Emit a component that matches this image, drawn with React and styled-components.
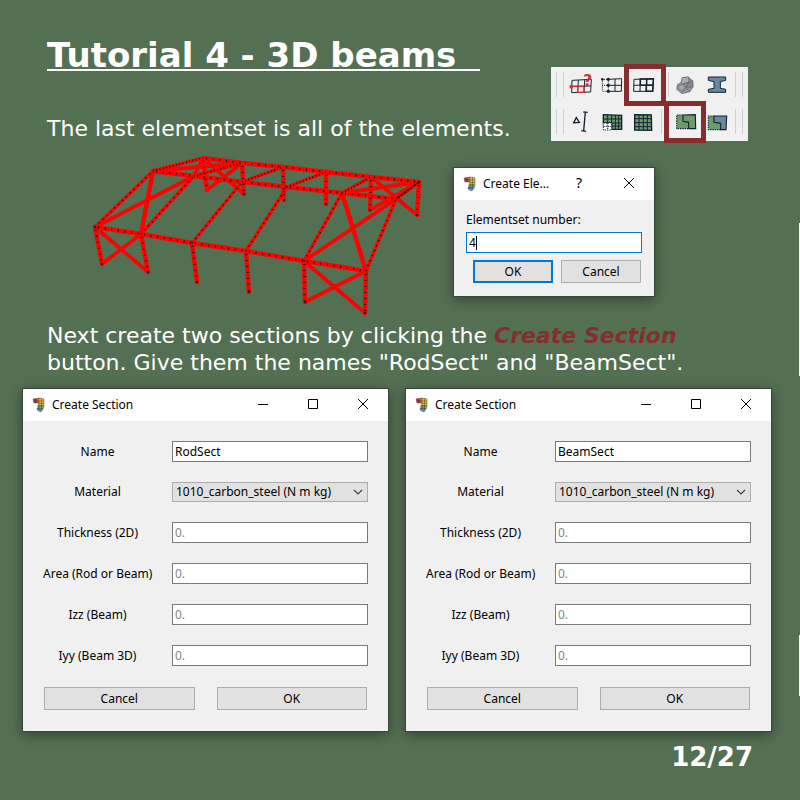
import React from "react";
import styled, { createGlobalStyle, css } from "styled-components";

const GlobalStyle = createGlobalStyle`
  * { box-sizing: border-box; }
  body { margin: 0; background: #547053; }
`;

const uiFont = css`
  font-family: "Noto Sans", "DejaVu Sans", sans-serif;
  font-size: 12px;
  line-height: 16px;
  color: #000;
`;

const Slide = styled.main`
  min-height: 100vh;
  padding: 35px 28px 0 22px;
  color: #fff;
  font-family: "DejaVu Sans", sans-serif;
  background-color: #547053;
  background-image: linear-gradient(#fff, #fff), linear-gradient(#fff, #fff);
  background-repeat: no-repeat;
  background-position: right 0 top 223px, right 0 top 635px;
  background-size: 1px 153px, 1px 61px;
`;

const Header = styled.header`
  display: flex;
  justify-content: space-between;
  align-items: flex-end;
  padding: 0 24px 0 25px;
`;

const Title = styled.h1`
  margin: 0 0 40px;
  font-size: 34px;
  line-height: 40px;
  font-weight: 700;
  white-space: pre;
  text-decoration: underline;
  text-decoration-thickness: 2px;
  text-underline-offset: 2px;
  text-decoration-skip-ink: none;
`;

const Text = styled.p`
  margin: 0;
  font-size: 22px;
  line-height: 27px;
`;

const Intro = styled(Text)`
  margin-top: 4px;
  padding-left: 25px;
  max-width: 700px;
`;

const Emphasis = styled.em`
  color: #862d2d;
  font-weight: 700;
`;

const Illustration = styled.section`
  display: grid;
  grid-template-columns: 340px auto;
  justify-content: start;
  gap: 25px;
  padding: 8px 0 0 66px;
`;

const Frame = styled.svg`
  display: block;
  width: 100%;
  height: auto;
`;

const Toolbar = styled.div`
  display: grid;
  grid-template-rows: 35px 39px;
  width: 197px;
  margin-bottom: 1px;
  background: #f0f0f0;
`;

const ToolRow = styled.div`
  display: flex;
  align-items: center;
`;

const Handle = styled.span`
  width: 8px;
  height: 25px;
  margin: 0 ${(p) => (p.$end ? 4 : 1)}px 0 ${(p) => (p.$end ? 2 : 5)}px;
  border: solid #cfcfcf;
  border-width: 0 1px;
`;

const Separator = styled.span`
  width: 8px;
  height: 25px;
  border: solid #cfcfcf;
  border-width: ${(p) => (p.$end ? "0 1px 0 0" : "0 0 0 1px")};
`;

const Tool = styled.button`
  position: relative;
  display: grid;
  place-items: center;
  width: 32px;
  height: 32px;
  padding: 0;
  border: 0;
  background: transparent;
  ${(p) =>
    p.$marked &&
    css`
      &::after {
        content: "";
        position: absolute;
        inset: -5px;
        border: 5px solid #862d2d;
      }
    `}
`;

const ToolIcon = styled.svg`
  width: 28px;
  height: 24px;
  overflow: visible;
`;

const Window = styled.section`
  ${uiFont}
  background: #f0f0f0;
  border: 1px solid #37483a;
  box-shadow: 0 3px 12px rgba(0, 0, 0, 0.4);
`;

const PromptWindow = styled(Window)`
  width: 202px;
  height: 130px;
  margin-top: 17px;
`;

const SectionWindow = styled(Window)`
  flex: 1;
  min-width: 0;
`;

const TitleBar = styled.header`
  display: flex;
  align-items: center;
  height: 32px;
  padding-left: 8px;
  background: #fff;
`;

const AppIcon = styled.svg`
  width: 16px;
  height: 16px;
  margin-right: 5px;
`;

const Caption = styled.h2`
  flex: 1;
  margin: 0;
  font: inherit;
  white-space: nowrap;
`;

const WindowButton = styled.button`
  display: grid;
  place-items: center;
  width: 50px;
  height: 32px;
  padding: 0 0 2px;
  border: 0;
  background: transparent;
  color: #000;
  font: inherit;
  font-size: 14px;
`;

const PromptForm = styled.form`
  display: flex;
  flex-direction: column;
  padding: 12px;
`;

const PromptField = styled.span`
  display: flex;
  align-items: center;
  height: 21px;
  margin: 4px 0 7px;
  padding-left: 2px;
  background: #fff;
  border: 1px solid #0078d7;
`;

const PromptInput = styled.input`
  ${uiFont}
  width: 7px;
  padding: 0;
  border: 0;
  outline: 0;
`;

const Caret = styled.span`
  width: 1px;
  height: 14px;
  background: #000;
`;

const Actions = styled.div`
  display: grid;
  grid-template-columns: 1fr 1fr;
  gap: ${(p) => p.$gap}px;
  padding: ${(p) => p.$padding};
`;

const Button = styled.button`
  ${uiFont}
  height: 23px;
  padding: 0;
  background: #e1e1e1;
  border: ${(p) => (p.$primary ? "2px solid #0078d7" : "1px solid #adadad")};
`;

const Windows = styled.div`
  display: flex;
  gap: 16px;
  margin-top: 12px;
`;

const SectionForm = styled.form`
  padding: 20px 20px 21px;
`;

const Fields = styled.div`
  display: grid;
  grid-template-columns: minmax(0, 1fr) 196px;
  column-gap: 20px;
  row-gap: 20px;
  align-items: center;
`;

const Label = styled.label`
  text-align: center;
  white-space: nowrap;
`;

const Input = styled.input`
  ${uiFont}
  width: 100%;
  height: 21px;
  padding: 0 2px;
  background: #fff;
  border: 1px solid #7a7a7a;
  border-radius: 0;
  &::placeholder { color: #858585; opacity: 1; }
`;

const SelectBox = styled.span`
  display: grid;
  align-items: center;
  > * { grid-area: 1 / 1; }
`;

const Select = styled.select`
  ${uiFont}
  appearance: none;
  width: 100%;
  height: 20px;
  padding: 0 18px 0 3px;
  background: #e1e1e1;
  border: 1px solid #adadad;
  border-radius: 0;
`;

const Chevron = styled.svg`
  justify-self: end;
  width: 10px;
  height: 6px;
  margin-right: 5px;
  pointer-events: none;
`;

const Footer = styled.footer`
  padding: 10px 19px 0 0;
  text-align: right;
  font-size: 26px;
  line-height: 30px;
  font-weight: 700;
`;

const N = {
  A: [95, 227], a: [102, 264], B: [153, 171], C: [141, 234], c: [148, 272],
  D: [194, 176], E: [203, 158], e: [207, 190], G: [192, 243], g: [197, 282],
  H: [246, 251], h: [249, 292], I: [304, 261], i: [305, 302], J: [366, 271],
  j: [365, 313], K: [342, 193], L: [396, 199], M: [419, 182], m: [417, 215],
  N: [371, 177], n: [370, 210], O: [326, 172], o: [326, 204], P: [283, 167],
  p: [284, 200], Q: [242, 163], q: [244, 194], R: [242, 182], S: [287, 187],
};
const lines = (list) =>
  list.split(" ").map((e) => `M${N[e[0]]}L${N[e[1]]}`).join("");

const RODS = lines("AD BC JK IL KM LM Nm Mn Eq Qe Ac Ca Ij Ji BQ DE");
const CHORDS = lines("AC CG GH HI IJ BD DR RS SK KL EQ QP PO ON NM");
const POSTS = lines("Aa Cc Gg Hh Ii Jj Ee Qq Pp Oo Nn Mm");
const RAFTERS = lines("AB CD GR HS IK JL");
const PURLINS = lines("BE DQ RP SO KN");

function BeamModel() {
  return (
    <Frame viewBox="88 150 340 168" role="img" aria-label="3D beam model">
      <g fill="none" stroke="#f00" strokeLinecap="round">
        <path strokeWidth="3.8" d={RODS} />
        <path strokeWidth="4.4" d={lines("BC JK")} />
        <path strokeWidth="4.4" d={CHORDS + POSTS} />
        <path strokeWidth="3.4" d={RAFTERS + PURLINS} />
      </g>
      <g fill="none" stroke="#111">
        <path strokeWidth="2.2" strokeDasharray="1 5.7" strokeDashoffset="-3" d={CHORDS} />
        <path strokeWidth="2.6" strokeDasharray=".8 5.2" strokeDashoffset="-3" d={POSTS} />
        <path strokeWidth="1.8" strokeDasharray="1 4.4" d={RAFTERS} />
        <path strokeWidth="1.8" strokeDasharray=".9 2.5" d={PURLINS} />
        <path strokeWidth="1.6" strokeDasharray="3 1" d={lines("ML")} />
      </g>
      <g fill="#222">
        {["A", "a", "c", "g", "h", "i", "j", "m", "n", "o", "p", "q", "M"].map((k) => (
          <circle key={k} cx={N[k][0]} cy={N[k][1]} r="1.3" />
        ))}
      </g>
    </Frame>
  );
}

const INK = "#142230";
const RED = "#d23030";
const GREEN = "#6b9c6b";

const GRID = "M282 71L341 69L338 107L281 107ZM281 89L340 88M301 70L300 107M320 70L318 107";

const ICONS = {
  query: {
    x: 81, y: 52,
    art: (
      <>
        <path d="M96 74L154 71L152 109L95 111ZM95 92L153 91M115 73L113 110M134 72L132 110" stroke={INK} strokeWidth="3" />
        <path d="M113 92H132V110H113ZM96 92H113" stroke={RED} strokeWidth="4" />
        <circle cx="94" cy="93" r="5.5" fill={RED} />
        <text x="130" y="90" fontFamily="DejaVu Sans" fontSize="46" fontWeight="700" fill={RED}>?</text>
      </>
    ),
  },
  nodes: {
    x: 177, y: 52,
    art: (
      <>
        <path d="M205 71L245 69L244 107L205 107M205 89H245M225 70V107" stroke={INK} strokeWidth="3" />
        <path d="M186 71H205M186 89H205M188 107H205M187 71V107M205 71V107" stroke={INK} strokeWidth="3" strokeDasharray="3 3" />
        <g fill={INK}>
          <circle cx="187" cy="71" r="4" /><circle cx="205" cy="71" r="5" />
          <circle cx="205" cy="89" r="5" /><circle cx="205" cy="107" r="5" />
        </g>
      </>
    ),
  },
  elements: {
    x: 273, y: 52,
    art: (
      <>
        <path d={GRID} stroke={INK} strokeWidth="3" />
        <path d="M301 70L340 69L338 107H319V89H301Z M320 70V89H340" stroke={INK} strokeWidth="4.5" />
      </>
    ),
  },
  material: {
    x: 393, y: 52,
    art: (
      <g stroke="#62676b" strokeWidth="2" strokeLinejoin="round">
        <path d="M427 66L445 64L458 75L459 94L450 108L426 114L410 101L413 86L423 81Z" fill="#92969a" />
        <path d="M427 66L445 64L447 79L429 85L423 81Z" fill="#aaaeb2" />
        <path d="M411 92L429 85L437 96L425 108Z" fill="#a1a5a9" />
        <path d="M447 79L458 75L459 94L437 96Z" fill="#858a8f" />
        <path d="M429 85L447 79L437 96ZM425 108L437 96L450 108" />
      </g>
    ),
  },
  beam: {
    x: 489, y: 52,
    art: (
      <path d="M505 64H557V74L541 78V98L557 101V110H505V101L522 98V78L505 74Z" fill="#6a889d" stroke={INK} strokeWidth="3" />
    ),
  },
  dimension: {
    x: 81, y: 164,
    art: (
      <>
        <path d="M101 202L109 187L118 201Z" stroke={INK} strokeWidth="4" />
        <path d="M130 170L143 171M136 170L131 226M124 226L138 228" stroke={INK} strokeWidth="4" />
      </>
    ),
  },
  partialSet: {
    x: 177, y: 164,
    art: (
      <>
        <path d="M190 178L245 180V222H215V203H190Z" fill={GREEN} stroke={INK} strokeWidth="4" />
        <path d="M190 191H245M215 203H245M215 212H245M203 179V203M215 179V222M226 179V222M236 179V222" stroke={INK} strokeWidth="3" />
        <path d="M190 203H215V224H190ZM190 213H215M203 203V224" fill="#fff" stroke={INK} strokeWidth="3" strokeDasharray="4 3" />
      </>
    ),
  },
  fullSet: {
    x: 273, y: 164,
    art: (
      <>
        <path d="M284 178L334 179L335 225L284 224Z" fill={GREEN} stroke={INK} strokeWidth="4" />
        <path d="M284 190H334M284 202H334M284 214H334M297 178V225M310 178V225M322 178V225" stroke={INK} strokeWidth="3" />
      </>
    ),
  },
  section: {
    x: 393, y: 164,
    art: (
      <>
        <path d="M410 179L466 178L467 220H410Z" fill={GREEN} />
        <path d="M429 179L466 178L467 220H446M429 179V198L446 201V220" stroke={INK} strokeWidth="3.4" />
        <path d="M429 179H410V220H446" stroke={INK} strokeWidth="3.4" strokeDasharray="4 3" />
      </>
    ),
  },
  assign: {
    x: 489, y: 164,
    art: (
      <>
        <path d="M505 182H522V203H542V223H505Z" fill={GREEN} />
        <path d="M522 182H560L558 223H542V204L522 201Z" fill="#6a889d" stroke={INK} strokeWidth="3.4" />
        <path d="M522 182H505V223H542" stroke={INK} strokeWidth="3.4" strokeDasharray="4 3" />
      </>
    ),
  },
};

function ToolButton({ name, marked }) {
  const { x, y, art } = ICONS[name];
  return (
    <Tool type="button" aria-label={name} $marked={marked}>
      <ToolIcon viewBox={`${x} ${y} 84 72`} fill="none">{art}</ToolIcon>
    </Tool>
  );
}

function Logo() {
  return (
    <AppIcon viewBox="0 0 16 16" fill="none">
      <path d="M2 2L8 1V6L3 6Z" fill="#c83238" />
      <path d="M6 2L9 1V6L7 6Z" fill="#d5823c" />
      <path d="M8 1L13 2V8H8Z" fill="#e0bd38" />
      <path d="M7.500 8H13L12 12H6.500Z" fill="#70a95a" />
      <path d="M6.500 11H12L10 15L6 13Z" fill="#4595b5" />
      <path d="M2 4H13M8 6.500H13M7 9H13M6 11.500H12M5 2V6M8 1V13M10.500 1V14" stroke="#30343a" strokeOpacity=".6" strokeWidth=".7" />
      <path d="M2 2L8 1L13 2V9L12 13L9 15L6 13L7.500 6H3Z" stroke="#5d4a3d" strokeOpacity=".7" strokeWidth=".7" />
    </AppIcon>
  );
}

const GLYPHS = {
  Minimize: "M0 6.500H10",
  Maximize: "M.5 1.500H9.500V10.500H.5Z",
  Close: "M0 1L10 11M10 1L0 11",
};

function WindowControl({ kind }) {
  return (
    <WindowButton type="button" aria-label={kind}>
      <svg width="10" height="12" viewBox="0 0 10 12" fill="none" stroke="#000">
        <path d={GLYPHS[kind]} />
      </svg>
    </WindowButton>
  );
}

const BLANK_FIELDS = ["Thickness (2D)", "Area (Rod or Beam)", "Izz (Beam)", "Iyy (Beam 3D)"];

function CreateSection({ name }) {
  const id = (s) => `${name}-${s}`;
  return (
    <SectionWindow>
      <TitleBar>
        <Logo />
        <Caption>Create Section</Caption>
        <WindowControl kind="Minimize" />
        <WindowControl kind="Maximize" />
        <WindowControl kind="Close" />
      </TitleBar>
      <SectionForm onSubmit={(e) => e.preventDefault()}>
        <Fields>
          <Label htmlFor={id("name")}>Name</Label>
          <Input id={id("name")} defaultValue={name} />
          <Label htmlFor={id("material")}>Material</Label>
          <SelectBox>
            <Select id={id("material")}>
              <option>1010_carbon_steel (N m kg)</option>
            </Select>
            <Chevron viewBox="0 0 10 6" fill="none" stroke="#444">
              <path d="M1 1L5 5L9 1" strokeWidth="1.200" />
            </Chevron>
          </SelectBox>
          {BLANK_FIELDS.map((f) => (
            <React.Fragment key={f}>
              <Label htmlFor={id(f)}>{f}</Label>
              <Input id={id(f)} placeholder="0." />
            </React.Fragment>
          ))}
        </Fields>
        <Actions $gap={22} $padding="21px 1px 0">
          <Button type="button">Cancel</Button>
          <Button type="submit">OK</Button>
        </Actions>
      </SectionForm>
    </SectionWindow>
  );
}

export default function App() {
  return (
    <>
      <GlobalStyle />
      <Slide>
        <Header>
          <div>
            <Title>{"Tutorial 4 - 3D beams  "}</Title>
            <Text>The last elementset is all of the elements.</Text>
          </div>
          <Toolbar role="toolbar">
            <ToolRow>
              <Handle />
              <ToolButton name="query" />
              <ToolButton name="nodes" />
              <ToolButton name="elements" marked />
              <Separator $end />
              <ToolButton name="material" />
              <ToolButton name="beam" />
              <Handle $end />
            </ToolRow>
            <ToolRow>
              <Handle />
              <ToolButton name="dimension" />
              <ToolButton name="partialSet" />
              <ToolButton name="fullSet" />
              <Separator />
              <ToolButton name="section" marked />
              <ToolButton name="assign" />
              <Handle $end />
            </ToolRow>
          </Toolbar>
        </Header>
        <Illustration>
          <BeamModel />
          <PromptWindow>
            <TitleBar>
              <Logo />
              <Caption>Create Ele...</Caption>
              <WindowButton type="button" aria-label="Help">?</WindowButton>
              <WindowControl kind="Close" />
            </TitleBar>
            <PromptForm onSubmit={(e) => e.preventDefault()}>
              <label htmlFor="elementset">Elementset number:</label>
              <PromptField>
                <PromptInput id="elementset" defaultValue="4" />
                <Caret />
              </PromptField>
              <Actions $gap={8} $padding="0 1px 0 7px">
                <Button type="submit" $primary>OK</Button>
                <Button type="button">Cancel</Button>
              </Actions>
            </PromptForm>
          </PromptWindow>
        </Illustration>
        <Intro>
          Next create two sections by clicking the <Emphasis>Create Section</Emphasis> button. Give
          them the names "RodSect" and "BeamSect".
        </Intro>
        <Windows>
          <CreateSection name="RodSect" />
          <CreateSection name="BeamSect" />
        </Windows>
        <Footer>12/27</Footer>
      </Slide>
    </>
  );
}
